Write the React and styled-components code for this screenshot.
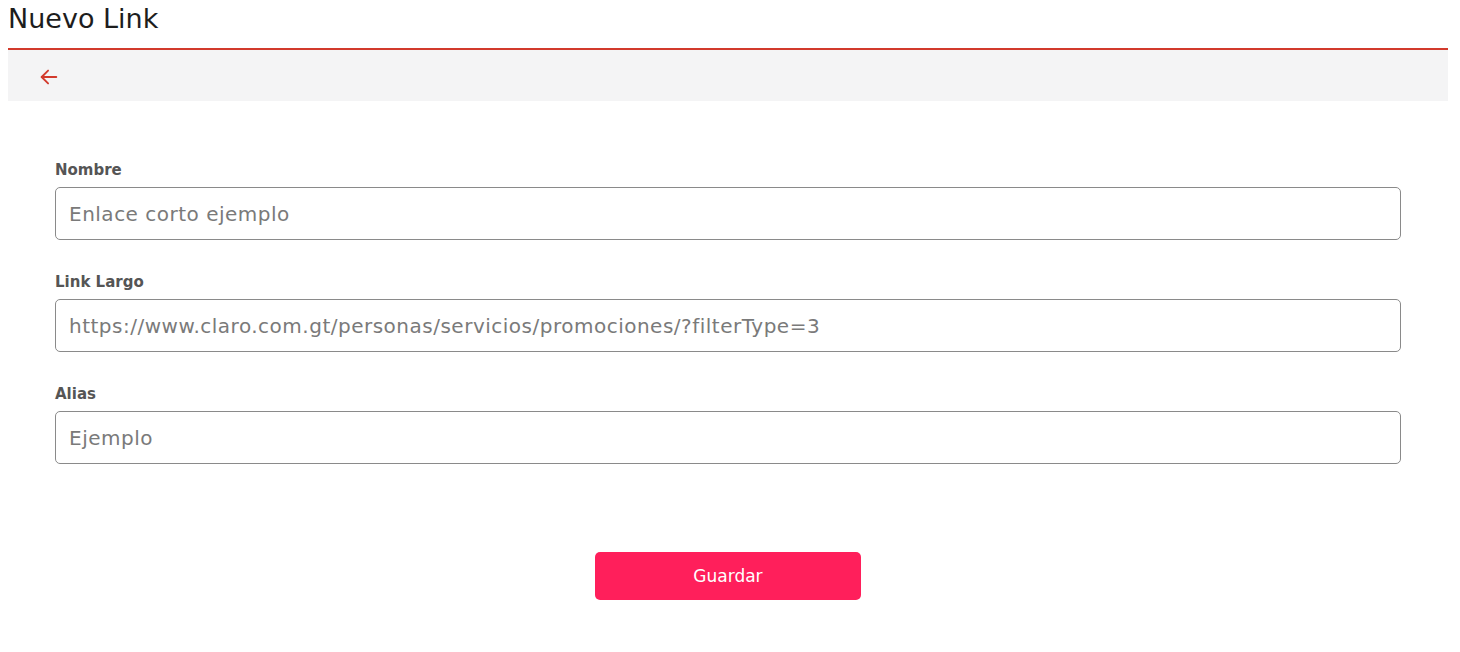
import React from "react";
import styled, { createGlobalStyle } from "styled-components";

const GlobalStyle = createGlobalStyle`
  body {
    margin: 0 8px;
    background: #fff;
    font-family: "DejaVu Sans", "Liberation Sans", sans-serif;
  }
`;

const Page = styled.div`
  width: 1440px;
`;

const Title = styled.h1`
  margin: 0;
  height: 50px;
  padding-top: 3px;
  box-sizing: border-box;
  font-size: 27px;
  font-weight: 400;
  color: #1d1d1d;
  line-height: 32px;
  border-bottom: 2px solid #d23a2c;
`;

const Toolbar = styled.div`
  height: 51px;
  background: #f4f4f5;
  display: flex;
  align-items: center;
  padding-left: 30px;
`;

const BackButton = styled.button`
  border: none;
  background: none;
  padding: 0;
  display: flex;
  align-items: center;
  cursor: pointer;
  margin-top: 2px;
`;

const Form = styled.form`
  padding: 59px 47px 0;
  display: flex;
  flex-direction: column;
  gap: 32px;
`;

const Field = styled.div`
  display: flex;
  flex-direction: column;
  gap: 6px;
`;

const Label = styled.label`
  font-size: 15px;
  font-weight: 700;
  color: #555;
  line-height: 21px;
`;

const Input = styled.input`
  height: 53px;
  box-sizing: border-box;
  border: 1px solid #8a8a8a;
  border-radius: 5px;
  padding: 0 13px;
  font-family: inherit;
  font-size: 20px;
  letter-spacing: 0.5px;
  color: #333;
  outline: none;
  &::placeholder {
    color: #7a7a7a;
  }
`;

const Actions = styled.div`
  display: flex;
  justify-content: center;
  margin-top: 56px;
`;

const SaveButton = styled.button`
  width: 266px;
  height: 48px;
  border: none;
  border-radius: 5px;
  background: #ff1f5b;
  color: #fff;
  font-family: inherit;
  font-size: 17px;
  cursor: pointer;
`;

const fields = [
  { id: "nombre", label: "Nombre", placeholder: "Enlace corto ejemplo" },
  {
    id: "link",
    label: "Link Largo",
    placeholder:
      "https://www.claro.com.gt/personas/servicios/promociones/?filterType=3",
  },
  { id: "alias", label: "Alias", placeholder: "Ejemplo" },
];

const App = () => {
  return (
    <Page>
      <GlobalStyle />
      <Title>Nuevo Link</Title>
      <Toolbar>
        <BackButton type="button" aria-label="Volver">
          <svg width="22" height="22" viewBox="0 0 24 24" fill="none"
            stroke="#d23a2c" strokeWidth="2" strokeLinecap="round" strokeLinejoin="round">
            <path d="M20 12H4" />
            <path d="M11 5l-7 7 7 7" />
          </svg>
        </BackButton>
      </Toolbar>
      <Form onSubmit={(e) => e.preventDefault()}>
        {fields.map((f) => (
          <Field key={f.id}>
            <Label htmlFor={f.id}>{f.label}</Label>
            <Input id={f.id} placeholder={f.placeholder} />
          </Field>
        ))}
        <Actions>
          <SaveButton type="submit">Guardar</SaveButton>
        </Actions>
      </Form>
    </Page>
  );
};

export default App;
